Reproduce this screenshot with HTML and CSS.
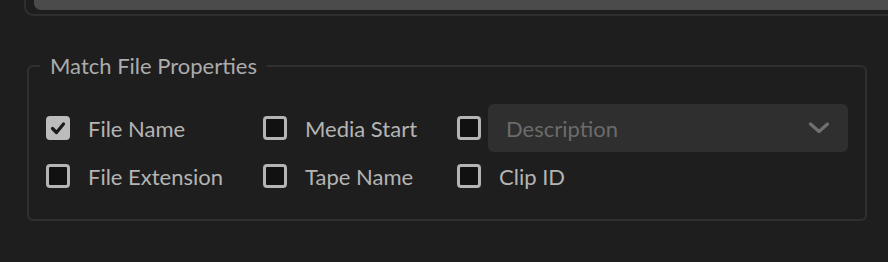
FILE: index.html
```html
<!DOCTYPE html>
<html lang="en">

<head>
    <meta charset="UTF-8">
    <meta name="viewport" content="width=device-width, initial-scale=1.0">
    <link rel="stylesheet" href="styles.css">
    <title>Match File Properties</title>
</head>

<body>

    <div class="source-box">
        <div class="source-field"></div>
    </div>

    <fieldset class="match-props">
        <legend>Match File Properties</legend>
        <div class="props-grid">
            <label class="prop">
                <span class="check checked">
                    <svg viewBox="0 0 24 24" width="24" height="24"><path d="M6.5 12.5 L10.5 16.5 L17.5 8" /></svg>
                </span>
                <span>File Name</span>
            </label>
            <label class="prop">
                <span class="check"></span>
                <span>Media Start</span>
            </label>
            <div class="prop">
                <span class="check"></span>
                <div class="dropdown">
                    <span>Description</span>
                    <svg viewBox="0 0 22 14" width="22" height="14"><path d="M2.5 3 L11 10.5 L19.5 3" /></svg>
                </div>
            </div>
            <label class="prop">
                <span class="check"></span>
                <span>File Extension</span>
            </label>
            <label class="prop">
                <span class="check"></span>
                <span>Tape Name</span>
            </label>
            <label class="prop">
                <span class="check"></span>
                <span>Clip ID</span>
            </label>
        </div>
    </fieldset>

</body>

</html>
```
FILE: styles.css
```css
body {
    margin: 0;
    background-color: #1e1e1e;
    font-family: 'Lato', sans-serif;
    color: #b4b4b4;
    overflow: hidden;
}

.source-box {
    height: 16px;
    margin: 0 -20px 0 24px;
    padding: 0 0 0 8px;
    border: 2px solid #2f2f2f;
    border-top: 0;
    border-radius: 0 0 0 9px;
    box-sizing: border-box;
}

.source-field {
    height: 10px;
    background-color: #4b4b4b;
    border-radius: 0 0 0 7px;
}

.match-props {
    width: 840px;
    margin: 37px 0 0 27px;
    padding: 0 0 19px 17px;
    border: 2px solid #303030;
    border-radius: 6px;
    box-sizing: border-box;
}

.match-props legend {
    margin-left: -6px;
    padding: 0 10px;
    font-size: 22px;
    line-height: 26px;
    color: #acacac;
}

.props-grid {
    display: grid;
    grid-template-columns: 217px 194px 1fr;
    grid-auto-rows: 48px;
    margin-top: 25px;
}

.prop {
    display: flex;
    align-items: center;
    gap: 18px;
    font-size: 22px;
}

.check {
    width: 24px;
    height: 24px;
    flex-shrink: 0;
    border: 3px solid #b4b4b4;
    border-radius: 4px;
    background-color: #111;
    box-sizing: border-box;
}

.check.checked {
    background-color: #bcbcbc;
    border-color: #bcbcbc;
}

.check svg {
    display: block;
    margin: -3px;
    fill: none;
    stroke: #1b1b1b;
    stroke-width: 3.2;
    stroke-linecap: round;
    stroke-linejoin: round;
}

.dropdown {
    display: flex;
    align-items: center;
    justify-content: space-between;
    width: 360px;
    height: 48px;
    margin-left: -11px;
    padding: 0 18px;
    background-color: #2f2f2f;
    border-radius: 6px;
    box-sizing: border-box;
    color: #6b6b6b;
}

.dropdown svg {
    fill: none;
    stroke: #707070;
    stroke-width: 3.2;
    stroke-linecap: round;
    stroke-linejoin: round;
}
```
